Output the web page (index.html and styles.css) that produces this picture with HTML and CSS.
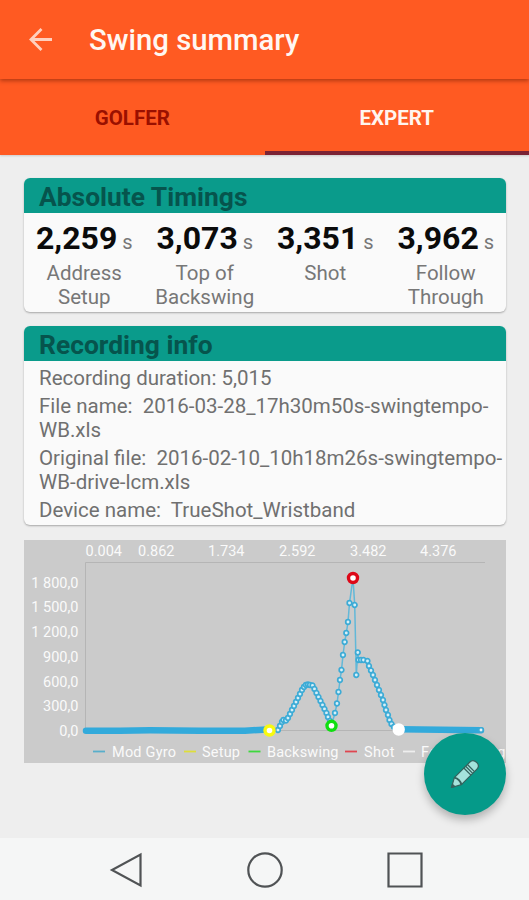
FILE: index.html
```html
<!DOCTYPE html>
<html lang="en">
<head>
<meta charset="utf-8">
<title>Swing summary</title>
<link rel="stylesheet" href="styles.css">
</head>
<body>
<div class="screen">
  <header class="toolbar">
    <svg class="back" viewBox="0 0 24 24" width="24" height="24"><path d="M23 11.500H2M12.500 1 2 11.500l10.500 10.500"/></svg>
    <h1 class="title">Swing summary</h1>
  </header>
  <nav class="tabs">
    <div class="tab">GOLFER</div>
    <div class="tab active">EXPERT</div>
  </nav>
  <main class="content">
    <section class="card timings">
      <h2 class="card-title">Absolute Timings</h2>
      <div class="grid">
        <div class="timing"><div class="value"><b>2,259</b> <span>s</span></div><div class="label">Address<br>Setup</div></div>
        <div class="timing"><div class="value"><b>3,073</b> <span>s</span></div><div class="label">Top of<br>Backswing</div></div>
        <div class="timing"><div class="value"><b>3,351</b> <span>s</span></div><div class="label">Shot</div></div>
        <div class="timing"><div class="value"><b>3,962</b> <span>s</span></div><div class="label">Follow<br>Through</div></div>
      </div>
    </section>
    <section class="card recording">
      <h2 class="card-title">Recording info</h2>
      <div class="info">
        <p>Recording duration: 5,015</p>
        <p>File name:&nbsp; 2016-03-28_17h30m50s-swingtempo-<br>WB.xls</p>
        <p>Original file:&nbsp; 2016-02-10_10h18m26s-swingtempo-<br>WB-drive-lcm.xls</p>
        <p>Device name:&nbsp; TrueShot_Wristband</p>
      </div>
    </section>
    <svg class="chart" viewBox="24 540 482 223" width="482" height="223">
      <defs>
        <marker id="dot" markerUnits="userSpaceOnUse" markerWidth="8" markerHeight="8" refX="4" refY="4"><circle cx="4" cy="4" r="2.300" fill="#d8f0f8" stroke="#3cabd6" stroke-width="1.700"/></marker>
      </defs>
      <path class="axis" d="M85.500 731V562.500H485M85.500 730.500H482"/>
      <g class="ticks">
        <text x="85.500" y="556" textLength="36.500">0.004</text>
        <text x="138" y="556" textLength="36.500">0.862</text>
        <text x="208" y="556" textLength="36.500">1.734</text>
        <text x="279" y="556" textLength="36.500">2.592</text>
        <text x="350" y="556" textLength="36.500">3.482</text>
        <text x="420" y="556" textLength="36.500">4.376</text>
      </g>
      <g class="ticks end">
        <text x="78.500" y="587.500">1 800,0</text>
        <text x="78.500" y="612">1 500,0</text>
        <text x="78.500" y="637">1 200,0</text>
        <text x="78.500" y="661.500">900,0</text>
        <text x="78.500" y="686.500">600,0</text>
        <text x="78.500" y="711">300,0</text>
        <text x="78.500" y="735.500">0,0</text>
      </g>
      <path class="base" d="M86 730.700H120L150 730.300 200 730.700H245L267 729.500M400 729.300 481 730.200"/>
      <polyline class="series" points="278,730 280,726 282,722 283.500,720 286,720.500 288,718 290,714 292,710 294,706 296,702 298,698 300,694 302,690 304,687 306,685 308,684.500 310,685 312.500,685.500 314.500,689 316.500,693 318.500,697 320.500,701 322.500,705 324.500,709 326.500,713 328,717 330,721 331.500,725 335,713 337,703.500 338.500,692 340,680 341.500,670 343,655 344.700,642 346.300,633 348,622 349.500,603 353,578 354.700,605 356.300,675 357.800,652.500 358.500,660 361,660 363.500,660 367.500,661 369,666 371,670.500 373,675 375,680 377,685 379,690 381,695 383,700 384.500,705 386,710 388,715 389.500,720 391.500,724 394,727 398,729"/>
      <circle class="end-dot" cx="481" cy="730" r="2.200"/>
      <g class="events">
        <circle cx="269.500" cy="730.500" r="4.500" stroke="#f8fa10"/>
        <circle cx="331.500" cy="725.800" r="4.500" stroke="#10df10"/>
        <circle cx="353" cy="578" r="4.500" stroke="#dd0818"/>
        <circle cx="398.700" cy="729.500" r="4.500" stroke="#fff"/>
      </g>
      <g class="keys">
        <path d="M93 751.500h12" stroke="#58aecb"/>
        <path d="M184 751.500h12" stroke="#dede3c"/>
        <path d="M248.500 751.500h12" stroke="#3ed83e"/>
        <path d="M345 751.500h12" stroke="#df4650"/>
        <path d="M403 751.500h12" stroke="#eee"/>
      </g>
      <g class="ticks">
        <text x="112" y="757" textLength="64">Mod Gyro</text>
        <text x="202" y="757" textLength="38">Setup</text>
        <text x="267" y="757" textLength="71.500">Backswing</text>
        <text x="364" y="757" textLength="30.500">Shot</text>
        <text x="421" y="757" textLength="84.500">Followswing</text>
      </g>
    </svg>
  </main>
  <button class="fab" aria-label="Edit">
    <svg viewBox="0 0 82 82" width="82" height="82">
      <g transform="translate(27.500 54.500) rotate(-45)" fill="#a5e3dc" stroke="#35625d" stroke-width="1.200" stroke-linejoin="round">
        <path d="M0 0 9-5H31Q35.500-5 35.500 0T31 5H9Z"/>
        <path d="M9-5Q12 0 9 5" fill="none" stroke-width="2"/>
        <path d="M22.500-5v10M25-5v10M27.500-5v10" stroke-width="1.300"/>
        <path d="M0 0 3-1.500V1.500Z" fill="#35625d"/>
      </g>
    </svg>
  </button>
  <footer class="navbar">
    <svg viewBox="0 0 36 40" width="36" height="40"><path d="M31.500 4.500v31L3 20Z"/></svg>
    <svg viewBox="0 0 40 40" width="40" height="40"><circle cx="20" cy="20" r="16.700"/></svg>
    <svg viewBox="0 0 40 40" width="40" height="40"><path d="M3.500 3.500h33v33h-33z"/></svg>
  </footer>
</div>
</body>
</html>
```
FILE: styles.css
```css
* { box-sizing: border-box; }
body { margin: 0; font-family: Roboto, "Liberation Sans", sans-serif; }
h1, h2, p { margin: 0; }
.screen {
  position: relative;
  display: flex;
  flex-direction: column;
  width: 529px;
  height: 900px;
  background: #eeeeee;
  overflow: hidden;
}
.toolbar {
  display: flex;
  align-items: center;
  gap: 35px;
  height: 79px;
  padding-left: 29px;
  background: #ff5a22;
  box-shadow: 0 2px 4px rgba(90, 20, 0, .45);
  z-index: 1;
}
.back { fill: none; stroke: #ffd0be; stroke-width: 2.800; }
.title { padding-left: 1px; color: #fff7f2; font-size: 29.300px; font-weight: 500; line-height: 36px; white-space: nowrap; }
.tabs {
  display: flex;
  height: 76px;
  background: #ff5a22;
  box-shadow: 0 1px 2px rgba(0, 0, 0, .15);
}
.tab {
  flex: 1;
  border-bottom: 4px solid transparent;
  color: #9a1000;
  font-size: 20.500px;
  font-weight: 700;
  line-height: 78px;
  text-align: center;
}
.tab.active { color: #fff5ef; border-bottom-color: #7b2335; }
.content {
  display: flex;
  flex: 1;
  flex-direction: column;
  align-items: flex-start;
  padding: 23px 23px 0 24px;
}
.card {
  width: 482px;
  border-radius: 6px;
  background: #fafafa;
  box-shadow: 0 1px 2px rgba(0, 0, 0, .3);
  overflow: hidden;
}
.timings { height: 134px; margin-bottom: 14px; }
.recording { height: 199px; margin-bottom: 15px; }
.card-title {
  height: 35px;
  padding-left: 15px;
  background: #0a9b8b;
  color: #06544d;
  font-size: 26.400px;
  font-weight: 700;
  line-height: 39px;
}
.grid { display: grid; grid-template-columns: repeat(4, 1fr); }
.timing { text-align: center; color: #777; }
.value { height: 48px; line-height: 50px; font-size: 20px; white-space: nowrap; }
.value b { color: #0b0b0b; font-size: 32px; }
.label { font-size: 20.500px; line-height: 24px; }
.info { padding: 5px 0 0 15px; color: #707070; font-size: 20.500px; line-height: 24px; white-space: nowrap; }
.info p { margin-bottom: 4px; }
.chart { display: block; background: #cbcbcb; }
.axis { fill: none; stroke: #b5b5b5; stroke-width: 1; }
.ticks { fill: #fafafa; font-size: 14.500px; }
.end { text-anchor: end; }
.base { fill: none; stroke: #32aadb; stroke-width: 6.500; stroke-linecap: round; }
.series { fill: none; stroke: #62b8d8; stroke-width: 1.500; marker-start: url(#dot); marker-mid: url(#dot); marker-end: url(#dot); }
.end-dot { fill: #e4f4fa; stroke: #3cabd6; stroke-width: 1.500; }
.events circle { fill: #fff; stroke-width: 3.400; }
.keys { stroke-width: 1.800; }
.fab {
  position: absolute;
  left: 424px;
  top: 733px;
  width: 82px;
  height: 82px;
  padding: 0;
  border: 0;
  border-radius: 50%;
  background: #059a89;
  box-shadow: 0 5px 9px rgba(0, 0, 0, .25);
}
.fab svg { display: block; }
.navbar {
  display: flex;
  align-items: center;
  justify-content: center;
  gap: 100px;
  height: 62px;
  padding: 1px 0 0 5px;
  background: #f5f6f6;
}
.navbar svg { fill: none; stroke: #505355; stroke-width: 2.200; }
```
